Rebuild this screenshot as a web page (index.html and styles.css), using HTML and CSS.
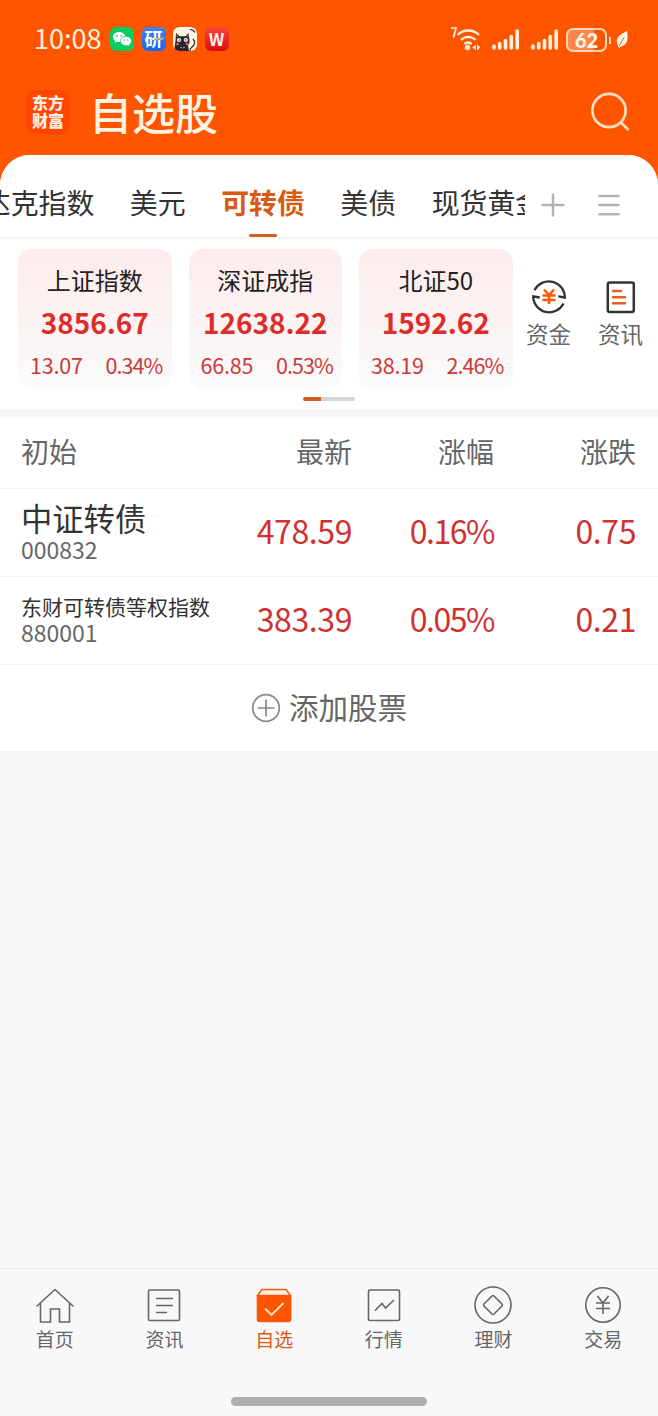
FILE: index.html
```html
<!DOCTYPE html>
<html lang="zh-CN">
<head>
  <meta charset="UTF-8" />
  <meta name="viewport" content="width=device-width, initial-scale=1" />
  <title>自选股</title>
  <link rel="stylesheet" href="styles.css">
</head>
<body>

  <!-- Barra de estado -->
  <div class="status">
    <span class="time">10:08</span>
    <div class="apps">
      <svg class="app" viewBox="0 0 24 24">
        <rect width="24" height="24" rx="6" fill="#06cf62"/>
        <path d="M9 5c-3.500 0-6 2.200-6 5 0 1.600.8 2.900 2.100 3.800L4.600 16l2.200-1.200c.7.200 1.400.3 2.200.3 3.500 0 6.200-2.300 6.200-5.100S12.500 5 9 5z" fill="#fff"/>
        <path d="M16 9.500c-3.200 0-5.600 2-5.600 4.600s2.400 4.600 5.600 4.600c.7 0 1.300-.1 1.900-.3l1.900 1-.4-1.900c1.300-.8 2.100-2 2.100-3.400 0-2.600-2.300-4.600-5.500-4.600z" fill="#fff" stroke="#06cf62" stroke-width=".7"/>
        <g fill="#06cf62"><circle cx="7" cy="8.800" r=".9"/><circle cx="11.200" cy="8.800" r=".9"/><circle cx="14.200" cy="13" r=".8"/><circle cx="17.800" cy="13" r=".8"/></g>
      </svg>
      <span class="app yan">研<i></i></span>
      <svg class="app" viewBox="0 0 24 24">
        <rect width="24" height="24" rx="6" fill="#fdf6e2"/>
        <path d="M2.500 14 3 6l3.500 3.300h6L15.500 6l1 8c0 2-.5 3-1.500 4l1 6H6c-3 0-4-1-4.500-3z" fill="#282430"/>
        <path d="M3.500 7.500 5 9.500l-1.300.8zM15 7.500l-1.500 2 1.400.8z" fill="#f0604f"/>
        <circle cx="6" cy="13" r="2.100" fill="#fff"/><circle cx="12.800" cy="13" r="2.100" fill="#fff"/>
        <circle cx="6.300" cy="13" r=".8" fill="#282430"/><circle cx="12.500" cy="13" r=".8" fill="#282430"/>
        <circle cx="4.500" cy="17" r="1.300" fill="#f0604f"/><circle cx="14" cy="17" r="1.300" fill="#f0604f"/>
        <path d="M7 20q2.500 2 5 0" fill="none" stroke="#8d8990" stroke-width="1"/>
        <path d="M17 2.500c2 0 4 1 5 3M20 12c3 3 1.500 6-1 8-1.500 1-2 2-2 4" fill="none" stroke="#282430" stroke-width="1.200"/>
      </svg>
      <span class="app wps">W</span>
    </div>
    <div class="signals">
      <svg width="30" height="24" viewBox="0 0 30 24" fill="none" stroke="#fff0dc">
        <path d="M0 1h5L2.500 10.500" stroke-width="1.700"/>
        <path d="M6.500 8c6-6 15.500-6 21.500 0M10 13c4-4.200 10.500-4.200 14.500 0M13.500 17c2-1.600 5-1.600 7 0" stroke-width="2.400"/>
        <circle cx="16.500" cy="20.500" r="2.700" fill="#fff0dc" stroke="none"/>
        <path d="m24.800 17.500-3.300 3 3.300 3zM26 17.500l3.300 3-3.300 3z" fill="#fff0dc" stroke="none"/>
      </svg>
      <svg class="bars" width="28" height="24" viewBox="0 0 28 24" stroke="#fff0dc" stroke-width="3.600" stroke-linecap="round">
        <path d="M2 19v2M7.700 16.500V21M13.500 13.500V21M19.300 9.500V21M25.200 4V21"/>
      </svg>
      <svg class="bars" width="28" height="24" viewBox="0 0 28 24" stroke="#fff0dc" stroke-width="3.600" stroke-linecap="round">
        <path d="M2 19v2M7.700 16.500V21M13.500 13.500V21M19.300 9.500V21M25.200 4V21"/>
      </svg>
      <span class="battery">62</span>
      <i class="tip"></i>
      <svg class="leaf" width="12" height="17" viewBox="0 0 12 17">
        <path d="M11 0c1 6 1.500 14-6 15.500L3 17l-.8-2C-1.500 9 2 4 11 0z" fill="#fff6e8"/>
        <path d="M3 15 8 6.500" stroke="#ff5500" stroke-width="1"/>
      </svg>
    </div>
  </div>

  <header>
    <div class="logo">东方<br>财富</div>
    <h1>自选股</h1>
    <svg class="search" width="40" height="40" viewBox="0 0 40 40" fill="none" stroke="#ffe0c4" stroke-width="2.600">
      <circle cx="19" cy="18.500" r="16.600"/><path d="m31 30.500 7.500 7.500"/>
    </svg>
  </header>

  <main>
    <nav class="tabs">
      <div class="tab-list">
        <a>纳斯达克指数</a>
        <a>美元</a>
        <a class="active">可转债</a>
        <a>美债</a>
        <a>现货黄金</a>
      </div>
      <svg width="24" height="24" viewBox="0 0 24 24" stroke="#b3b3b3" stroke-width="2.500" stroke-linecap="round"><path d="M1.500 12h21M12 1.500v21"/></svg>
      <svg class="menu" width="24" height="24" viewBox="0 0 24 24" stroke="#b3b3b3" stroke-width="2.500" stroke-linecap="round"><path d="M2.500 3h19M2.500 12h19M2.500 21.200h19"/></svg>
    </nav>

    <!-- Indices -->
    <section class="indices">
      <div class="card">
        <h3>上证指数</h3>
        <b>3856.67</b>
        <p><span>13.07</span><span class="pct">0.34%</span></p>
      </div>
      <div class="card">
        <h3>深证成指</h3>
        <b>12638.22</b>
        <p><span>66.85</span><span class="pct">0.53%</span></p>
      </div>
      <div class="card">
        <h3>北证50</h3>
        <b>1592.62</b>
        <p><span>38.19</span><span class="pct">2.46%</span></p>
      </div>
      <div class="tool">
        <svg width="36" height="36" viewBox="0 0 36 36" fill="none" stroke="#333" stroke-width="2.300">
          <path d="M3.500 11.200A16 16 0 0 1 33.800 18.500l-6.500-1.200M32.500 24.500A16 16 0 0 1 2.200 17.300l6.500 1.200"/>
          <path d="m13 10.500 5 5.500 5-5.500M11.500 16.500h13M11.500 21h13M18 16v9" stroke="#ff5500" stroke-width="2.500"/>
        </svg>
        <span>资金</span>
      </div>
      <div class="tool">
        <svg width="36" height="36" viewBox="0 0 36 36" fill="none" stroke="#333" stroke-width="2.500">
          <rect x="4.800" y="3.500" width="26" height="29.500" rx="2"/>
          <path d="M10 12h8M10 18.200h12M10 24.200h12" stroke="#e4601c" stroke-linecap="round"/>
        </svg>
        <span>资讯</span>
      </div>
    </section>
    <div class="pager"><i></i></div>

    <!-- Lista de valores -->
    <section class="list">
      <div class="row head"><span>初始</span><span>最新</span><span>涨幅</span><span>涨跌</span></div>
      <div class="row">
        <div class="name"><strong>中证转债</strong><small>000832</small></div>
        <span>478.59</span><span class="pct">0.16%</span><span>0.75</span>
      </div>
      <div class="row">
        <div class="name long"><strong>东财可转债等权指数</strong><small>880001</small></div>
        <span>383.39</span><span class="pct">0.05%</span><span>0.21</span>
      </div>
      <div class="add">
        <svg width="30" height="30" viewBox="0 0 30 30" fill="none" stroke="#888" stroke-width="1.700"><circle cx="15" cy="15" r="13.300"/><path d="M6.500 15h17M15 6.500v17"/></svg>
        <span>添加股票</span>
      </div>
    </section>
  </main>

  <footer>
    <div class="menu-bar">
      <a>
        <svg width="40" height="40" viewBox="0 0 40 40"><path d="m1.500 21.500 18.500-17 18.500 17M5.500 18.500V37h10V24h9v13h10V18.500"/></svg>
        首页
      </a>
      <a>
        <svg width="40" height="40" viewBox="0 0 40 40"><rect x="4.500" y="5" width="31" height="30.500" rx="1.500"/><path d="M12 13.500h17M12 20.500h17M12 27.500h11"/></svg>
        资讯
      </a>
      <a class="active">
        <svg width="40" height="40" viewBox="0 0 40 40">
          <path d="M8 4.500h24l4.500 6h-33z" fill="#fff0dc" stroke="#ec5a14" stroke-width="1.500"/>
          <path d="M2.700 10.500h34.600v23.800q0 3-3 3H5.700q-3 0-3-3z" fill="#ff5500" stroke="none"/>
          <path d="m11 23.500 6.500 6.500L29.500 18" stroke="#ffe6cf" stroke-width="1.900"/>
        </svg>
        自选
      </a>
      <a>
        <svg width="40" height="40" viewBox="0 0 40 40"><rect x="4.500" y="5" width="31" height="30.500" rx="1.500"/><path d="m11 25.500 7-7 3.500 4.500 8.500-8"/></svg>
        行情
      </a>
      <a>
        <svg width="40" height="40" viewBox="0 0 40 40"><circle cx="20" cy="20" r="18"/><path d="m19 11-8 8q-1 1 0 2l8 8q1 1 2 0l8-8q1-1 0-2l-8-8q-1-1-2 0z"/></svg>
        理财
      </a>
      <a>
        <svg width="40" height="40" viewBox="0 0 40 40"><circle cx="20" cy="20" r="17.200"/><path d="m14.500 11 5.500 7 5.500-7M13 18h14M13 23.500h14M20 18v11"/></svg>
        交易
      </a>
    </div>
    <div class="home-bar"></div>
  </footer>

</body>
</html>
```

FILE: styles.css
```css
* {
  margin: 0;
  padding: 0;
  box-sizing: border-box;
}

body {
  font-family: 'Noto Sans CJK SC', sans-serif;
  background: #ff5500;
  color: #333;
  height: 1416px;
  overflow: hidden;
  display: flex;
  flex-direction: column;
}

svg {
  display: block;
  flex: none;
}

i {
  display: block;
}

/* barra de estado */
.status {
  height: 78px;
  padding: 0 30px 0 34px;
  display: flex;
  align-items: center;
  color: #fff0dc;
}

.time {
  font-size: 27px;
  width: 76px;
  line-height: 40px;
  padding-bottom: 2px;
}

.apps {
  display: flex;
  gap: 7.500px;
}

.app {
  width: 24px;
  height: 24px;
  border-radius: 6px;
  text-align: center;
  line-height: 23px;
  font-weight: bold;
}

.yan {
  background: linear-gradient(#4384f2, #1468ee);
  color: #fff;
  font-size: 18px;
  position: relative;
}

.yan i {
  position: absolute;
  right: 2px;
  top: 11px;
  width: 10px;
  height: 2px;
  background: #c4a347;
  transform: rotate(-8deg);
}

.wps {
  background: linear-gradient(#fa4738, #da0c10);
  color: #fff0e8;
  font-size: 17px;
}

.signals {
  margin-left: auto;
  display: flex;
  align-items: center;
}

.bars {
  margin-left: 11px;
}

.battery {
  width: 41px;
  height: 24px;
  margin: 1px 0 0 7px;
  border: 2px solid #ffd9b8;
  border-radius: 7px;
  background: linear-gradient(90deg, #ff8449 70%, #ff5500 70%);
  font-family: Lato, sans-serif;
  font-size: 20px;
  font-weight: 900;
  line-height: 20px;
  text-align: center;
  color: #fff6e8;
}

.tip {
  width: 2px;
  height: 7px;
  margin: 2px 5px 0 2px;
  background: #ffd9b8;
}

.leaf {
  margin-top: 1px;
}

/* cabecera */
header {
  height: 77px;
  padding: 0 28px 9px 26px;
  display: flex;
  align-items: center;
}

.logo {
  width: 44px;
  height: 44px;
  border-radius: 9px;
  background: #ff4500;
  color: #ffeee0;
  font-size: 16px;
  font-weight: 900;
  line-height: 18px;
  text-align: center;
  padding-top: 3px;
}

h1 {
  margin-left: 19px;
  padding-bottom: 3px;
  font-size: 43px;
  font-weight: 500;
  line-height: 60px;
  color: #fff3e2;
}

.search {
  margin-left: auto;
}

/* contenido */
main {
  flex: 1;
  background: #f7f8fa;
  border-radius: 30px 30px 0 0;
  overflow: hidden;
}

.tabs {
  height: 84px;
  background: #fff;
  border-bottom: 2px solid #f4f4f4;
  display: flex;
  align-items: center;
  padding-top: 18px;
}

.tab-list {
  width: 525px;
  height: 66px;
  margin-right: 16px;
  overflow: hidden;
  display: flex;
  justify-content: flex-start;
  gap: 35.500px;
}

.tab-list a {
  flex: none;
  font-size: 27.900px;
  line-height: 60px;
  height: 66px;
}

.tab-list a:first-child {
  margin-left: -73px;
}

.tab-list .active {
  color: #d95a14;
  font-weight: bold;
}

.tab-list .active::after {
  content: '';
  display: block;
  width: 28px;
  height: 3px;
  border-radius: 2px;
  margin: 2px auto 0;
  background: #d05f24;
}

.menu {
  margin-left: 32px;
}

.indices {
  height: 149px;
  padding: 10px 0 0 18px;
  display: flex;
  background: #fff;
}

.card {
  width: 153.500px;
  height: 139px;
  margin-right: 17px;
  border-radius: 14px;
  background: linear-gradient(#fdebeb, #fafafa);
  text-align: center;
}

.card h3 {
  font-size: 24px;
  font-weight: normal;
  line-height: 36px;
  padding-top: 13px;
  color: #222;
}

.card b {
  display: block;
  font-size: 28px;
  line-height: 36px;
  margin-top: 6px;
  color: #dd2c2c;
}

.card p {
  display: flex;
  justify-content: space-between;
  padding: 0 9px 0 12px;
  margin-top: 9px;
  font-size: 21.500px;
  line-height: 32px;
  letter-spacing: -.2px;
  color: #c93a3a;
}

.card .pct {
  letter-spacing: -.9px;
}

.tool {
  width: 72px;
  padding-top: 30px;
  display: flex;
  flex-direction: column;
  align-items: center;
  font-size: 22.500px;
  line-height: 34px;
  color: #666;
}

.tool span {
  margin-top: 1px;
}

.card:nth-child(3) {
  margin-right: 0;
}

.pager {
  height: 30px;
  padding: 9px 0 0 303px;
  background: #fff;
  border-bottom: 9px solid #f6f7fa;
}

.pager i {
  width: 52px;
  height: 4px;
  border-radius: 2px;
  background: linear-gradient(90deg, #d05f24 34%, #d2d5da 34%);
}

/* lista */
.list {
  background: #fff;
}

.row {
  height: 88px;
  padding: 0 22px 0 21px;
  display: grid;
  grid-template-columns: 189px 142px 142px 142px;
  align-items: center;
  border-bottom: 1px solid #f0f0f0;
}

.row > span {
  text-align: right;
  font-size: 32px;
  line-height: 48px;
  padding-bottom: 5px;
  letter-spacing: -.4px;
  color: #cf3131;
}

.row > .pct {
  letter-spacing: -1.500px;
}

.row.head {
  height: 71px;
}

.head > span {
  font-size: 28px;
  line-height: 40px;
  padding-bottom: 4px;
  letter-spacing: 0;
  color: #666;
}

.head > span:first-child {
  text-align: left;
}

.name {
  white-space: nowrap;
  padding-bottom: 4px;
}

.name strong {
  display: block;
  font-size: 31.300px;
  font-weight: normal;
  line-height: 36px;
}

.name small {
  display: block;
  font-size: 23px;
  line-height: 26px;
  color: #666;
}

.long strong {
  font-size: 21px;
  line-height: 26px;
}

.add {
  height: 87px;
  display: flex;
  align-items: center;
  justify-content: center;
  gap: 8px;
  font-size: 29.500px;
  line-height: 44px;
  color: #666;
  border-bottom: 1px solid #f0f0f0;
}

.add span {
  padding-bottom: 4px;
}

/* menu inferior */
footer {
  height: 148px;
  background: #f8f8fb;
  border-top: 1px solid #ebebed;
}

.menu-bar {
  height: 128px;
  padding-top: 16px;
  display: grid;
  grid-template-columns: repeat(6, 1fr);
}

.menu-bar a {
  display: flex;
  flex-direction: column;
  align-items: center;
  font-size: 19px;
  line-height: 28px;
  color: #666;
}

.menu-bar svg {
  fill: none;
  stroke: #666;
  stroke-width: 1.600;
}

.menu-bar .active {
  color: #d95a14;
}

.home-bar {
  width: 196px;
  height: 9px;
  margin: 0 auto;
  border-radius: 5px;
  background: #afafb1;
}
```
